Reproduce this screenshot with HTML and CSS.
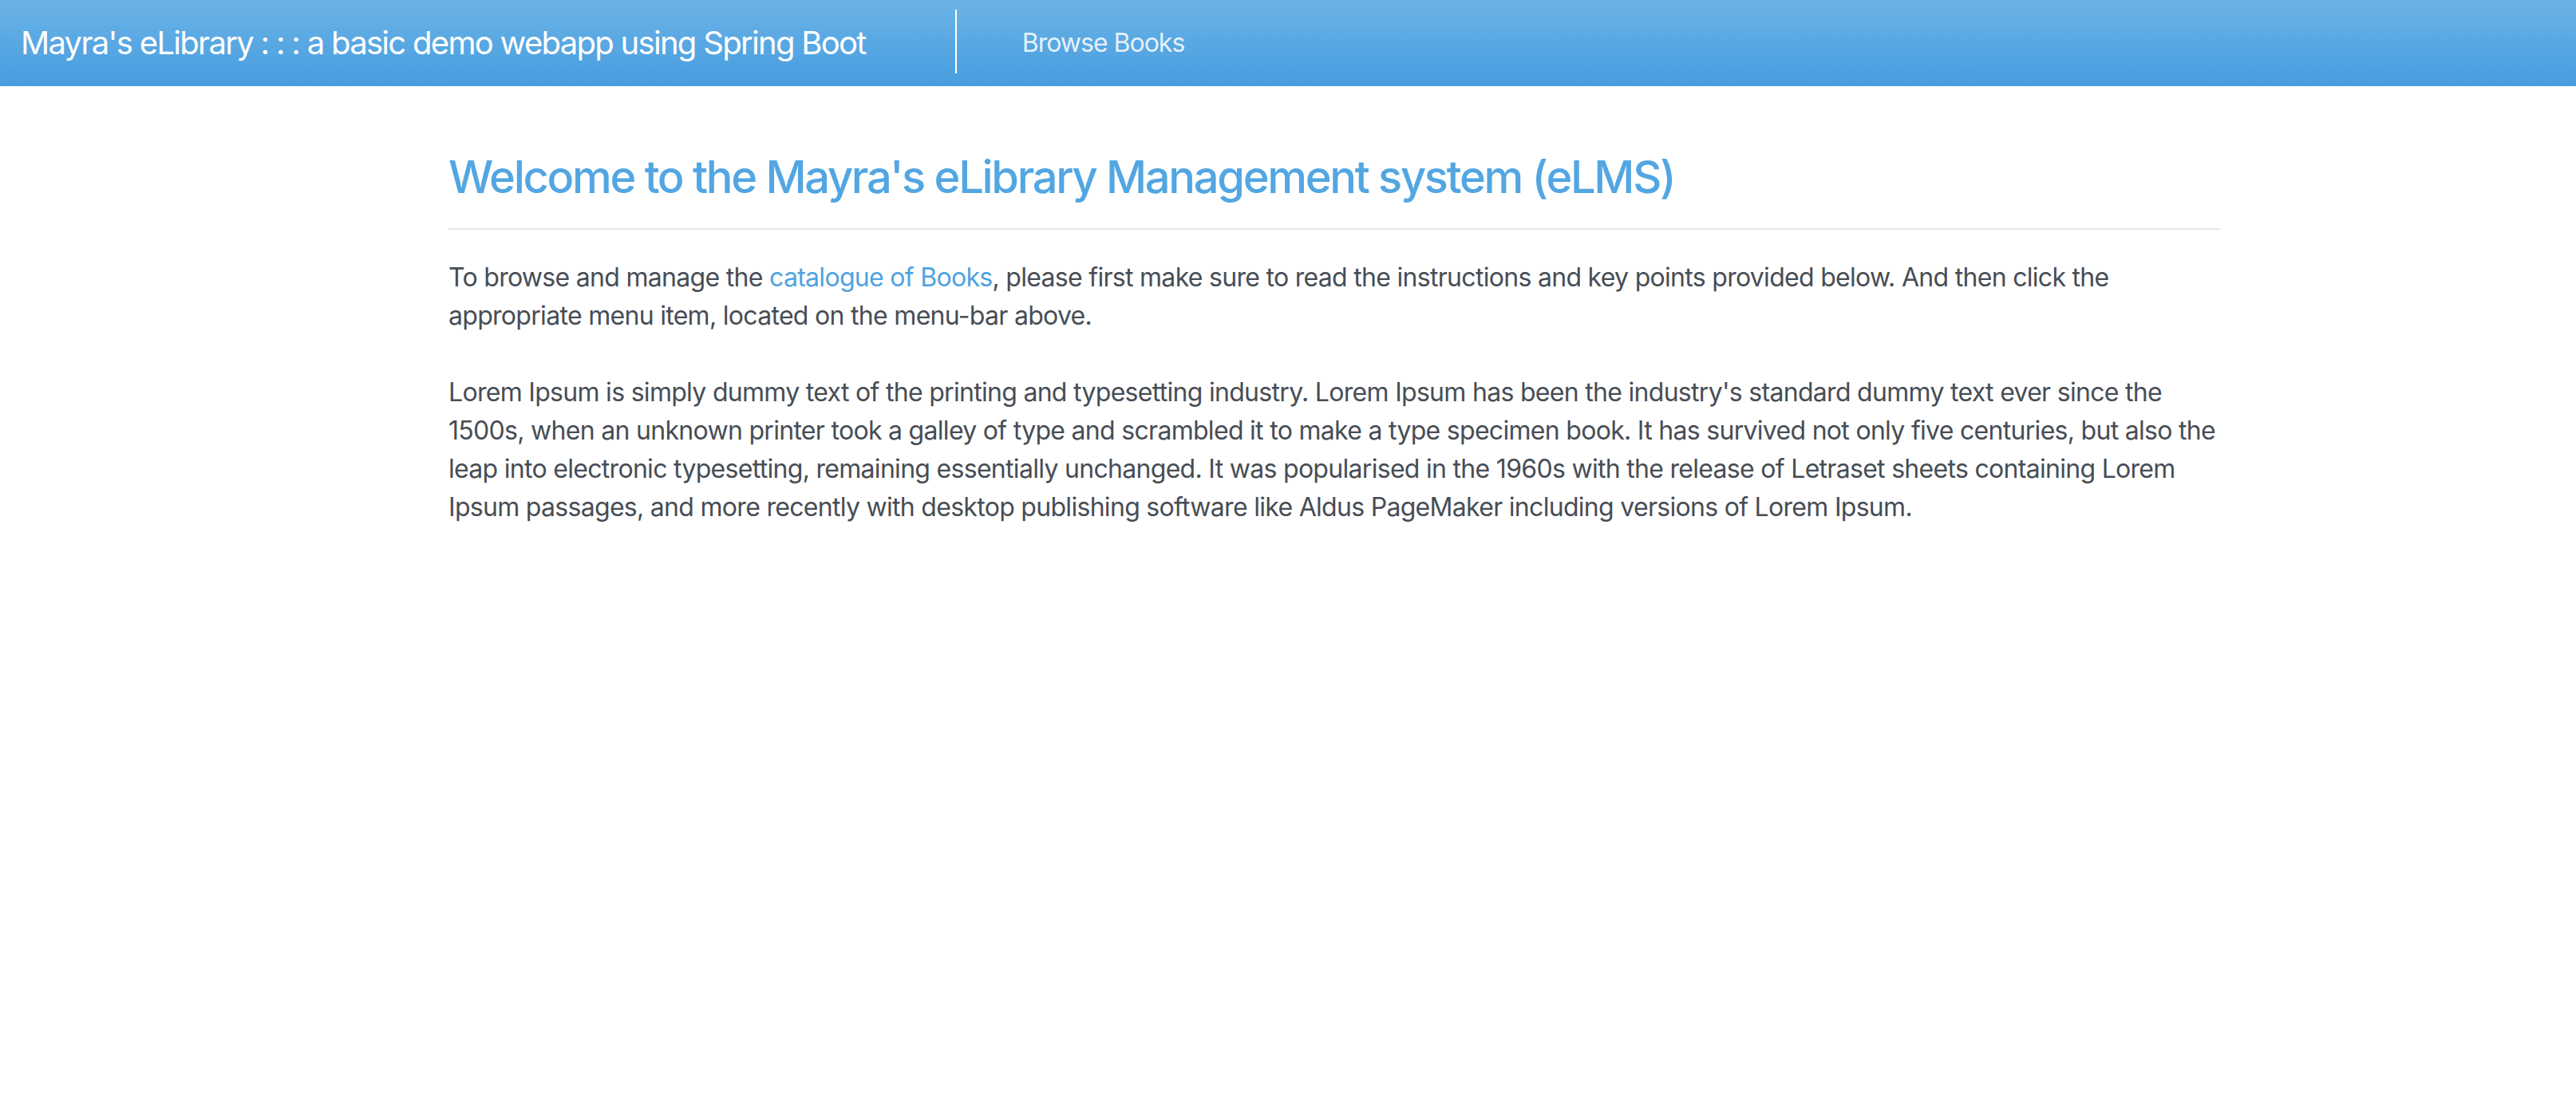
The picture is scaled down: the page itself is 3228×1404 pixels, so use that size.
FILE: index.html
```html
<!DOCTYPE html>
<html lang="en">
<head>
<meta charset="utf-8">
<title>Mayra's eLibrary</title>
<link rel="stylesheet" href="styles.css">
</head>
<body>
<header class="navbar">
  <a class="brand" href="#">Mayra's eLibrary : : : a basic demo webapp using Spring Boot</a>
  <span class="divider"></span>
  <nav class="menu">
    <a class="menu-item" href="#">Browse Books</a>
  </nav>
</header>
<main class="main">
  <div class="container">
    <h1 class="title">Welcome to the Mayra's eLibrary Management system (eLMS)</h1>
    <hr class="rule">
    <p class="text">To browse and manage the <a class="link" href="#">catalogue of Books</a>, please first make sure to read the instructions and key points provided below. And then click the appropriate menu item, located on the menu-bar above.</p>
    <p class="text">Lorem Ipsum is simply dummy text of the printing and typesetting industry. Lorem Ipsum has been the industry's standard dummy text ever since the 1500s, when an unknown printer took a galley of type and scrambled it to make a type specimen book. It has survived not only five centuries, but also the leap into electronic typesetting, remaining essentially unchanged. It was popularised in the 1960s with the release of Letraset sheets containing Lorem Ipsum passages, and more recently with desktop publishing software like Aldus PageMaker including versions of Lorem Ipsum.</p>
  </div>
</main>
</body>
</html>
```
FILE: styles.css
```css
* { box-sizing: border-box; }
html, body { margin: 0; padding: 0; background: #fff; }
body {
  font-family: Inter, "Noto Sans", "Liberation Sans", sans-serif;
  color: #474d55;
  font-size: 32px;
  line-height: 48px;
  letter-spacing: -0.7px;
}
.navbar {
  height: 108px;
  display: flex;
  align-items: center;
  background: linear-gradient(to bottom, #6bb3e7 0%, #479ddf 100%);
  padding-left: 26px;
}
.brand {
  color: #fff;
  text-decoration: none;
  font-size: 40px;
  line-height: 60px;
  letter-spacing: -1.7px;
  white-space: nowrap;
}
.divider {
  width: 2px;
  height: 80px;
  background: #fff;
  margin-left: 112px;
  align-self: flex-start;
  margin-top: 12px;
}
.menu { display: flex; margin-left: 82px; }
.menu-item {
  color: rgba(255,255,255,0.85);
  text-decoration: none;
  font-size: 32px;
  line-height: 48px;
  letter-spacing: -1px;
}
.main { padding-left: 116px; }
.container { width: 2220px; margin: 0 auto; padding-top: 80px; }
.title {
  margin: 0;
  font-size: 56px;
  line-height: 68px;
  font-weight: 500;
  color: #52a6e2;
  letter-spacing: -2.3px;
}
.rule {
  border: 0;
  height: 2px;
  background: #e5e5e5;
  margin: 30px 0 36px;
}
.text { margin: 0 0 48px; }
.link { color: #4fa3e0; text-decoration: none; }
```
